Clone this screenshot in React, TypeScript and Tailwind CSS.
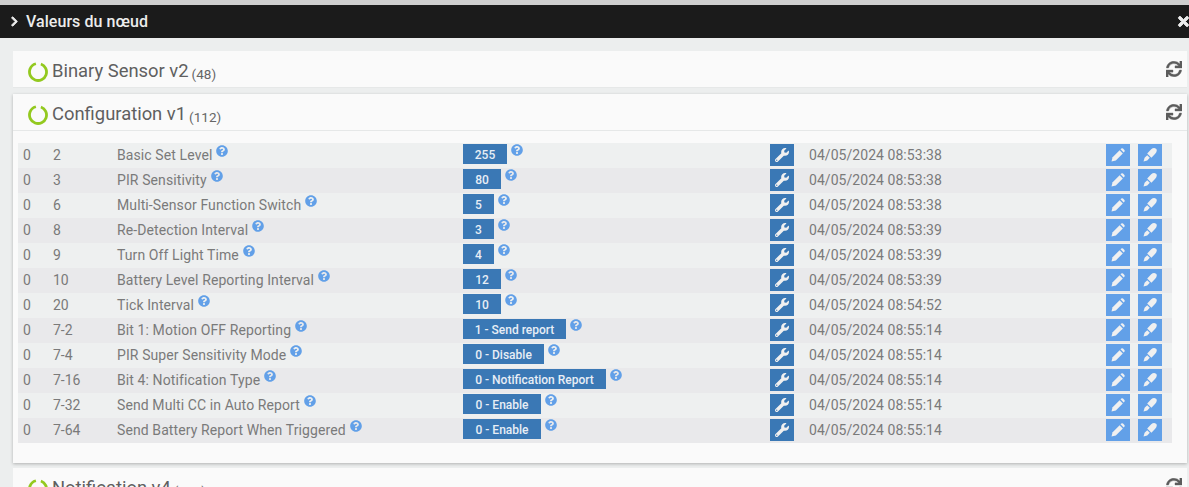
import { FaChevronRight, FaQuestionCircle, FaSync, FaTimes, FaWrench } from 'react-icons/fa';

type Param = {
  inst: string;
  index: string;
  label: string;
  value: string;
  width: string;
  time: string;
};

const params: Param[] = [
  { inst: '0', index: '2', label: 'Basic Set Level', value: '255', width: 'w-[44px]', time: '08:53:38' },
  { inst: '0', index: '3', label: 'PIR Sensitivity', value: '80', width: 'w-[38px]', time: '08:53:38' },
  { inst: '0', index: '6', label: 'Multi-Sensor Function Switch', value: '5', width: 'w-[31px]', time: '08:53:38' },
  { inst: '0', index: '8', label: 'Re-Detection Interval', value: '3', width: 'w-[31px]', time: '08:53:39' },
  { inst: '0', index: '9', label: 'Turn Off Light Time', value: '4', width: 'w-[31px]', time: '08:53:39' },
  { inst: '0', index: '10', label: 'Battery Level Reporting Interval', value: '12', width: 'w-[38px]', time: '08:53:39' },
  { inst: '0', index: '20', label: 'Tick Interval', value: '10', width: 'w-[38px]', time: '08:54:52' },
  { inst: '0', index: '7-2', label: 'Bit 1: Motion OFF Reporting', value: '1 - Send report', width: 'w-[103px]', time: '08:55:14' },
  { inst: '0', index: '7-4', label: 'PIR Super Sensitivity Mode', value: '0 - Disable', width: 'w-[81px]', time: '08:55:14' },
  { inst: '0', index: '7-16', label: 'Bit 4: Notification Type', value: '0 - Notification Report', width: 'w-[143px]', time: '08:55:14' },
  { inst: '0', index: '7-32', label: 'Send Multi CC in Auto Report', value: '0 - Enable', width: 'w-[78px]', time: '08:55:14' },
  { inst: '0', index: '7-64', label: 'Send Battery Report When Triggered', value: '0 - Enable', width: 'w-[78px]', time: '08:55:14' },
];

const Help = () => (
  <FaQuestionCircle className="ml-[4px] h-[12px] w-[12px] shrink-0 self-start text-[#62a0e8]" />
);

const Ring = () => (
  <svg viewBox="0 0 20 20" className="h-[20px] w-[20px] shrink-0">
    <circle cx="10" cy="10" r="8.5" fill="none" stroke="#93c91f" strokeWidth="2.8" strokeDasharray="48 5.4" transform="rotate(-70 10 10)" />
  </svg>
);

const PencilIcon = () => (
  <svg viewBox="0 0 16 16" className="h-[16px] w-[16px] text-[#f0f0f0]" fill="currentColor">
    <path d="M1.5 14.5 L2.6 10.2 L9.6 3.2 L12.8 6.4 L5.8 13.4 Z" />
    <path d="M10.5 2.3 L11.3 1.6 Q12.2 0.9 13 1.6 L14.4 3 Q15.1 3.8 14.4 4.7 L13.7 5.5 Z" />
  </svg>
);

const MarkerIcon = () => (
  <svg viewBox="0 0 16 16" className="h-[16px] w-[16px] text-[#f0f0f0]" fill="currentColor">
    <path d="M1.5 14.5 L2.6 10.8 L5.2 8.2 L7.8 10.8 L5.2 13.4 Z" />
    <path d="M5.2 6.6 L9.2 2.2 Q11 0.8 13 1.2 Q15 1.6 14.8 3.6 Q14.6 5.4 13.2 6.8 L9.4 10.8 Z" />
  </svg>
);

const SectionHeader = ({ title, count, last }: { title: string; count: string; last?: boolean }) => (
  <div className={`flex items-start bg-[#fafafa] pl-[15px] pr-[5px] ${last ? 'mt-[-1px] h-[20px] overflow-hidden' : 'h-[37px] border-b border-[#e6e8e8]'}`}>
    <div className="mt-[8px] flex items-center">
      <Ring />
      <span className="mb-[2px] ml-[4px] text-[18.4px] leading-[20px] text-[#5f5f5f]">{title}</span>
      <span className="ml-[3px] mt-[5px] text-[13.5px] leading-[20px] text-[#666]">{count}</span>
    </div>
    <FaSync className="ml-auto mt-[10px] h-[16px] w-[16px] stroke-current stroke-[12] text-[#5c5c5c]" />
  </div>
);

const ParamRow = ({ p, odd }: { p: Param; odd: boolean }) => (
  <div className={`flex h-[25px] items-center text-[14px] text-[#7a7a7a] ${odd ? 'bg-[#e9e9eb]' : 'bg-[#eef0f0]'}`}>
    <span className="w-[35px] pl-[5px]">{p.inst}</span>
    <span className="w-[64px]">{p.index}</span>
    <div className="flex w-[346px] items-center">
      <span className="tracking-[0.1px]">{p.label}</span>
      <Help />
    </div>
    <div className="mt-[1px] flex w-[307px] items-start self-start">
      <span className={`flex h-[20px] ${p.width} items-center justify-center bg-[#3a78b5] pt-[2px] text-[12px] font-medium text-[#e8eef5]`}>
        {p.value}
      </span>
      <Help />
    </div>
    <span className="mt-[1px] flex h-[22px] w-[24px] items-center justify-center self-start bg-[#3a78b5]">
      <FaWrench className="h-[14px] w-[14px] text-[#f0f0f0]" />
    </span>
    <span className="ml-[15px] w-[297px] tracking-[0.05px]">04/05/2024 {p.time}</span>
    <span className="mt-[1px] flex h-[22px] w-[24px] items-center justify-center self-start bg-[#62a0e8]">
      <PencilIcon />
    </span>
    <span className="ml-[8px] mt-[1px] flex h-[22px] w-[24px] items-center justify-center self-start bg-[#62a0e8]">
      <MarkerIcon />
    </span>
  </div>
);

const App = () => {
  return (
    <div className="h-[487px] w-[1189px] overflow-hidden bg-[#eceeee] font-['Roboto',sans-serif]">
      <div className="h-[5px] bg-[#cfcfcf]" />
      {/* Title bar */}
      <div className="flex h-[33px] items-center justify-between bg-[#1b1b1b] pl-[9px] text-[#ececec]">
        <div className="flex items-center">
          <FaChevronRight className="h-[11px] w-[11px] stroke-current stroke-[40]" />
          <span className="ml-[6px] text-[16px] font-medium leading-none tracking-[0.05px]">Valeurs du nœud</span>
        </div>
        <FaTimes className="mr-[-2px] h-[15px] w-[15px] stroke-current stroke-[30]" />
      </div>

      <div className="ml-[13px] mr-[2px] mt-[13px] flex flex-col gap-[6px]">
        <SectionHeader title="Binary Sensor v2" count="(48)" />
        <div className="shadow-[0_1px_3px_rgba(0,0,0,0.25)]">
          <SectionHeader title="Configuration v1" count="(112)" />
          {/* Parameters */}
          <div className="h-[332px] bg-[#fafafa] pl-[5px] pr-[15px] pt-[12px]">
            {params.map((p, i) => (
              <ParamRow key={p.index} p={p} odd={i % 2 === 1} />
            ))}
          </div>
        </div>
        <SectionHeader title="Notification v4" count="(113)" last />
      </div>
    </div>
  );
};

export default App;
